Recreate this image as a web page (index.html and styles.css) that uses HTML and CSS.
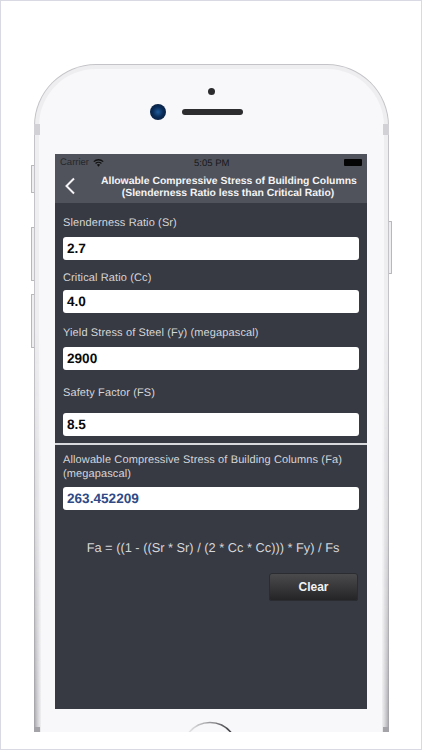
FILE: index.html
```html
<!DOCTYPE html>
<html lang="en">
<head>
<meta charset="utf-8">
<title>Allowable Compressive Stress</title>
<link rel="stylesheet" href="styles.css">
</head>
<body>
<div class="frame">
  <div class="stage">
    <div class="phone">
      <span class="side side-mute"></span>
      <span class="side side-up"></span>
      <span class="side side-down"></span>
      <span class="side side-power"></span>
      <span class="band band-l"></span>
      <span class="band band-r"></span>
      <span class="edge edge-l"></span>
      <span class="edge edge-r"></span>
      <span class="foot foot-l"></span>
      <span class="foot foot-r"></span>
      <div class="bezel">
        <div class="sensors">
          <span class="dot"></span>
          <div class="cam-row">
            <span class="camera"></span>
            <span class="speaker"></span>
          </div>
        </div>
        <div class="screen">
          <header class="head">
            <div class="status">
              <span class="carrier">Carrier
                <svg class="wifi" viewBox="0 0 12 9" width="11" height="8"><path d="M6 8.6 4.2 6.6a2.6 2.6 0 0 1 3.6 0zM3.2 5.6 2.2 4.5a5.5 5.5 0 0 1 7.6 0l-1 1.1a4 4 0 0 0-5.6 0zM1.2 3.5 .2 2.4a8.4 8.4 0 0 1 11.6 0l-1 1.1a7 7 0 0 0-9.6 0z" fill="#111"/></svg>
              </span>
              <span class="time">5:05 PM</span>
              <span class="battery"></span>
            </div>
            <div class="nav">
              <svg class="back" viewBox="0 0 12 18" width="12" height="18"><path d="M10 1.5 2.5 9l7.5 7.5" fill="none" stroke="#f4f4f6" stroke-width="2"/></svg>
              <h1 class="title">Allowable Compressive Stress of Building Columns<br>(Slenderness Ratio less than Critical Ratio)</h1>
            </div>
          </header>
          <main class="content">
            <label class="lbl l1">Slenderness Ratio (Sr)</label>
            <div class="field">2.7</div>
            <label class="lbl l2">Critical Ratio (Cc)</label>
            <div class="field">4.0</div>
            <label class="lbl l3">Yield Stress of Steel (Fy) (megapascal)</label>
            <div class="field">2900</div>
            <label class="lbl l4">Safety Factor (FS)</label>
            <div class="field">8.5</div>
            <hr class="rule">
            <label class="lbl l5">Allowable Compressive Stress of Building Columns (Fa) (megapascal)</label>
            <div class="field result">263.452209</div>
            <p class="formula">Fa = ((1 - ((Sr * Sr) / (2 * Cc * Cc))) * Fy) / Fs</p>
            <div class="actions"><button class="clear" type="button">Clear</button></div>
          </main>
        </div>
        <svg class="home" viewBox="0 0 48 12" width="48" height="12">
          <defs>
            <linearGradient id="homeStroke" x1="0" y1="0" x2="1" y2="0">
              <stop offset="0" stop-color="#e4e4e6"/>
              <stop offset=".5" stop-color="#9a9a9e"/>
              <stop offset="1" stop-color="#3e3e42"/>
            </linearGradient>
          </defs>
          <path d="M3 11.5A27 27 0 0 1 45 11.5" fill="none" stroke="url(#homeStroke)" stroke-width="1.6"/>
        </svg>
      </div>
    </div>
  </div>
</div>
</body>
</html>
```
FILE: styles.css
```css
* { box-sizing: border-box; }
html, body { margin: 0; padding: 0; background: #fff; }
body { width: 422px; height: 750px; overflow: hidden; font-family: "Liberation Sans", Arial, sans-serif; text-rendering: geometricPrecision; }
.frame { width: 422px; height: 750px; border: 1.5px solid #d9d9e3; background: #fff; overflow: hidden; }
.stage { height: 730.5px; overflow: hidden; padding: 63px 0 0 32.5px; }
.phone { position: relative; width: 355px; height: 720px; }
.bezel {
  width: 355px; height: 720px; margin: 0; padding: 23px 19px 0 20.5px;
  background: #f8f8fa; border-radius: 62px 62px 0 0 / 62px 62px 0 0;
  border: 1px solid #c4c4c8; border-bottom: 0;
  box-shadow: inset 0 0 0 4px #eeeef1;
}
.band { position: absolute; top: 60px; width: 6px; height: 11px; background: #d2d2d6; z-index: 1; }
.band-l { left: 0; }
.band-r { right: 0; }
.edge { position: absolute; top: 71px; bottom: 0; width: 7px; z-index: 1; -webkit-mask-image: linear-gradient(180deg, transparent 30%, rgba(0,0,0,.35) 62%, #000 95%); mask-image: linear-gradient(180deg, transparent 30%, rgba(0,0,0,.35) 62%, #000 95%); }
.edge-l { left: 0; background: linear-gradient(90deg, #9c9ca0, #d0d0d4 55%, #eeeef0); }
.edge-r { right: 0; background: linear-gradient(270deg, #9c9ca0, #d0d0d4 55%, #eeeef0); }
.foot { position: absolute; top: 662.5px; width: 6px; height: 6px; background: #a4a4a8; z-index: 2; }
.foot-l { left: 0; }
.foot-r { right: 0; }
.side { position: absolute; width: 3px; left: -3px; background: #eeeef0; border: 1px solid #b8b8bc; border-right: 0; border-radius: 1px 0 0 1px; }
.side-mute { top: 101px; height: 28px; }
.side-up { top: 163px; height: 54px; }
.side-down { top: 230px; height: 54px; }
.side-power { left: auto; right: -3px; top: 157px; height: 53px; border-right: 1px solid #b8b8bc; border-left: 0; border-radius: 0 1px 1px 0; }
.sensors { height: 66px; display: flex; flex-direction: column; align-items: center; }
.dot { width: 7px; height: 7px; border-radius: 50%; background: #2b2b2e; }
.cam-row { display: flex; align-items: center; gap: 16px; margin-top: 9px; margin-left: -31px; }
.camera { width: 16px; height: 16px; border-radius: 50%; background: radial-gradient(circle at 50% 50%, #1f5c9c 0, #0a2c58 45%, #08182f 100%); }
.speaker { width: 61px; height: 6px; border-radius: 3px; background: #2d2d30; }
.screen { width: 312px; height: 555px; background: #373a43; color: #fff; display: flex; flex-direction: column; }
.head { height: 49px; background: #50535b; }
.status { height: 18px; padding: 0 5px 1px 5px; display: flex; align-items: center; justify-content: space-between; position: relative; font-size: 9.5px; color: #17181b; }
.carrier { display: flex; align-items: center; gap: 4px; color: #26272b; }
.wifi { display: block; }
.time { position: absolute; left: 139px; top: 3.5px; line-height: 11px; }
.battery { width: 18px; height: 7px; background: #050505; border-radius: 1px; }
.nav { height: 31px; display: flex; align-items: center; position: relative; }
.back { position: absolute; left: 9px; top: 5px; }
.title { margin: 0 0 0 46px; width: 254px; font-size: 10.4px; line-height: 12px; font-weight: 700; text-align: center; color: #f4f4f6; white-space: nowrap; }
.content { padding: 0 8px; display: flex; flex-direction: column; flex: 1; }
.lbl { display: block; font-size: 11px; line-height: 14px; color: #d5d5d8; letter-spacing: .12px; }
.l1 { margin-top: 13px; margin-bottom: 7px; }
.l2 { margin-top: 11px; margin-bottom: 5px; }
.l3 { margin-top: 13px; margin-bottom: 7px; }
.l4 { margin-top: 16px; margin-bottom: 13px; }
.l5 { margin-top: 8px; margin-bottom: 6px; }
.field { height: 23px; background: #fff; border-radius: 3px; color: #0a0a0a; font-size: 13.6px; font-weight: 700; line-height: 23px; padding-left: 4px; }
.result { color: #2f4a86; }
.rule { margin: 7px -8px 0; height: 2px; border: 0; background: #d8d9dc; }
.formula { margin: 30px 0 0; text-align: center; font-size: 12.8px; line-height: 16px; color: #d5d6da; padding-left: 4px; }
.actions { display: flex; justify-content: flex-end; margin-top: 17px; padding-right: 1px; }
.clear { width: 89px; height: 28px; padding: 0; border: 0; border-radius: 3px; background: linear-gradient(#4c4c4e, #232325); box-shadow: inset 0 0 0 1px #2a2c32; color: #f2f2f2; font: 700 12px "Liberation Sans", Arial, sans-serif; }
.home { display: block; margin: 12px 0 0 131px; }
```
